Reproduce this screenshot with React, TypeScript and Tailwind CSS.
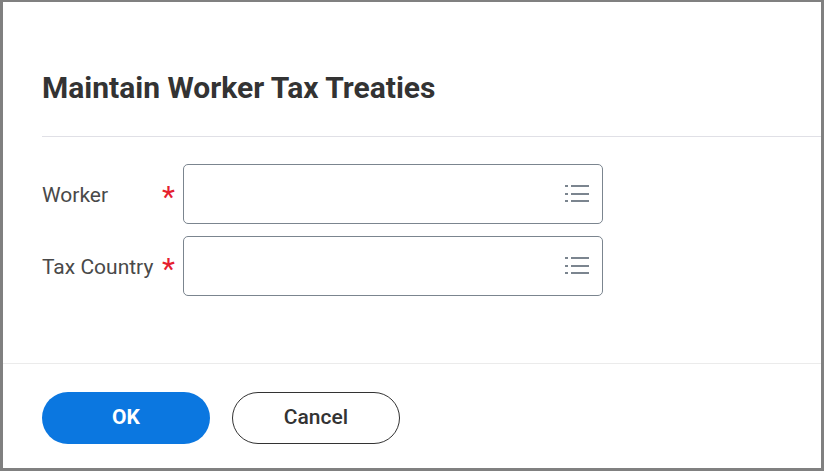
import React from "react";

const ListIcon = () => (
  <svg width="26" height="20" viewBox="0 0 26 20" fill="#7b858f">
    <rect x="1" y="1" width="3" height="2" />
    <rect x="7" y="1" width="18" height="2" />
    <rect x="1" y="9" width="3" height="2" />
    <rect x="7" y="9" width="18" height="2" />
    <rect x="1" y="16" width="3" height="2" />
    <rect x="7" y="16" width="18" height="2" />
  </svg>
);

const Field = ({ label }: { label: string }) => (
  <div className="flex items-center h-[60px]">
    <div className="w-[120px] text-[21px] text-[#494949] pt-[3px]">{label}</div>
    <div className="w-[21px] text-[30px] leading-none text-[#e5202e] pt-[6px]">*</div>
    <div className="w-[420px] h-[60px] border border-[#7b858f] rounded-[5px] flex items-center justify-end pr-[12px]">
      <ListIcon />
    </div>
  </div>
);

export default function App() {
  return (
    <div
      className="w-[824px] h-[471px] bg-white border-l-[3px] border-r-[3px] border-t-2 border-b-[3px] border-[#808080] flex flex-col"
      style={{ fontFamily: "Roboto, 'Liberation Sans', sans-serif" }}
    >
      <div className="ml-[39px] pt-[68px] pb-[30px] border-b border-[#e0e0e6]">
        <h1 className="text-[30px] font-bold text-[#333333] leading-[36px]">Maintain Worker Tax Treaties</h1>
      </div>
      <div className="flex-1 flex flex-col gap-[12px] pl-[39px] pt-[27px] border-b border-[#ebebeb]">
        <Field label="Worker" />
        <Field label="Tax Country" />
      </div>
      <div className="flex items-center gap-[22px] pl-[39px] pt-[3px] h-[104px]">
        <button className="w-[168px] h-[52px] rounded-full bg-[#0b77e0] text-white text-[21px] font-bold">OK</button>
        <button className="w-[168px] h-[52px] rounded-full border border-[#333333] text-[#333333] text-[21px] font-medium">Cancel</button>
      </div>
    </div>
  );
}
